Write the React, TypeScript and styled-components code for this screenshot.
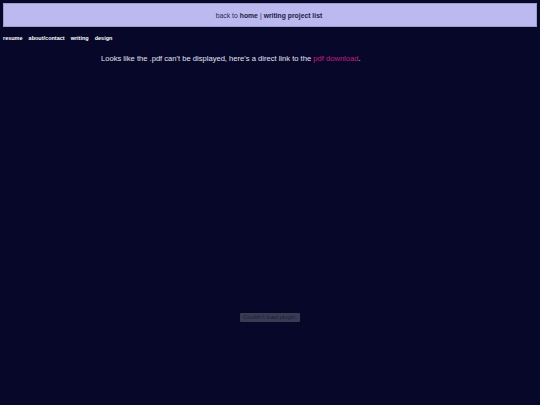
import styled, { createGlobalStyle } from "styled-components";

const GlobalStyle = createGlobalStyle`
  html, body {
    margin: 0;
    padding: 0;
    background: #07072a;
    font-family: "Liberation Sans", Arial, sans-serif;
  }
`;

const Page = styled.div`
  height: 405px;
  overflow: hidden;
  padding: 3px;
  box-sizing: border-box;
  display: flex;
  flex-direction: column;
`;

const Banner = styled.div`
  height: 22px;
  flex-shrink: 0;
  display: flex;
  align-items: center;
  justify-content: center;
  background: #babaf0;
  border: 1px solid #9c9cc8;
  color: #2a2a55;
  font-size: 6.8px;
`;

const BannerLink = styled.a`
  font-weight: bold;
  color: #1c1c40;
  text-decoration: none;
  margin: 0 2px;
`;

const Nav = styled.nav`
  display: flex;
  gap: 6px;
  margin-top: 8px;
  font-size: 5.5px;
  font-weight: bold;
`;

const NavLink = styled.a`
  color: #ffffff;
  text-decoration: none;
`;

const Message = styled.p`
  margin: 13px 0 0;
  padding-left: 98px;
  color: #e4e4f2;
  font-size: 7.6px;
`;

const PdfLink = styled.a`
  color: #c0207a;
  text-decoration: none;
`;

const Viewer = styled.div`
  height: 508px;
  flex-shrink: 0;
  display: flex;
  align-items: center;
  justify-content: center;
`;

const PluginNotice = styled.span`
  background: #3a3a55;
  color: #1a1a35;
  font-size: 6px;
  padding: 1.5px 3px;
  border-radius: 1px;
`;

export default function App() {
  return (
    <>
      <GlobalStyle />
      <Page>
        <Banner>
          back to <BannerLink href="#">home</BannerLink>|
          <BannerLink href="#">writing project list</BannerLink>
        </Banner>
        <Nav>
          <NavLink href="#">resume</NavLink>
          <NavLink href="#">about/contact</NavLink>
          <NavLink href="#">writing</NavLink>
          <NavLink href="#">design</NavLink>
        </Nav>
        <Message>
          Looks like the .pdf can't be displayed, here's a direct link to the{" "}
          <PdfLink href="#">pdf download</PdfLink>.
        </Message>
        <Viewer>
          <PluginNotice>Couldn't load plugin.</PluginNotice>
        </Viewer>
      </Page>
    </>
  );
}
